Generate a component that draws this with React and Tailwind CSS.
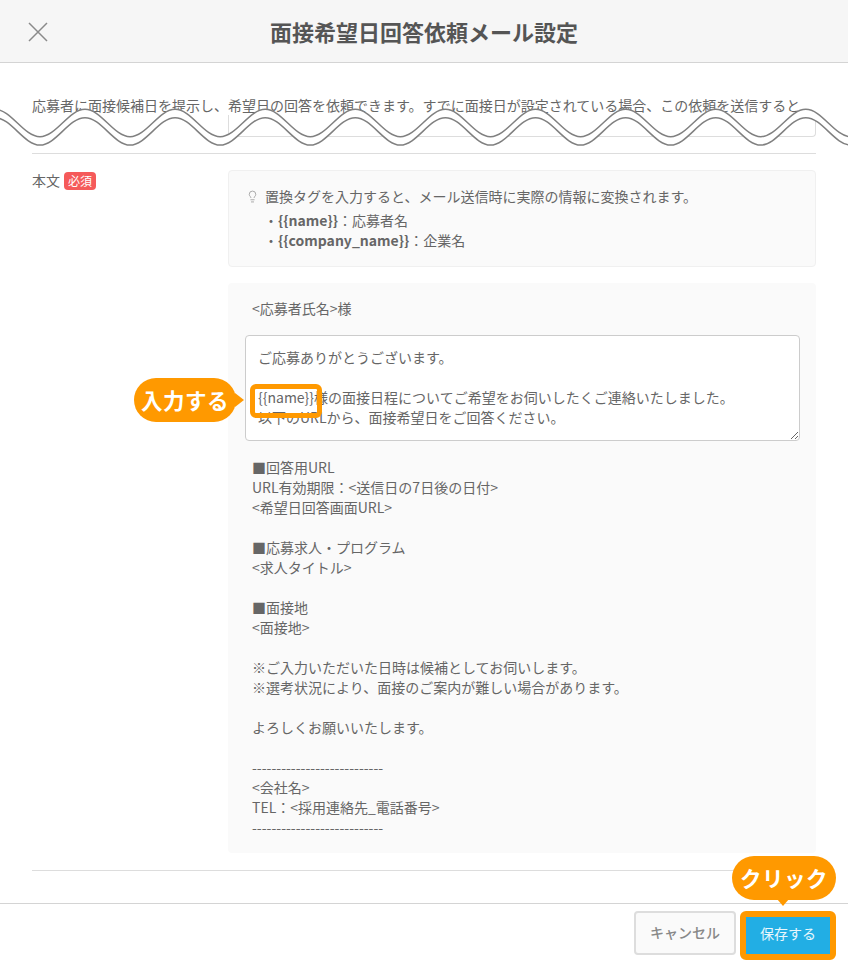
import React from 'react';
import { Lightbulb } from 'lucide-react';

const bodyText = `ご応募ありがとうございます。

{{name}}様の面接日程についてご希望をお伺いしたくご連絡いたしました。
以下のURLから、面接希望日をご回答ください。`;

const afterText = `■回答用URL
URL有効期限：<送信日の7日後の日付>
<希望日回答画面URL>

■応募求人・プログラム
<求人タイトル>

■面接地
<面接地>

※ご入力いただいた日時は候補としてお伺いします。
※選考状況により、面接のご案内が難しい場合があります。

よろしくお願いいたします。

---------------------------
<会社名>
TEL：<採用連絡先_電話番号>
---------------------------`;

// 省略を示す波線（2本の線を縦にずらして、間を白で塗る）
const period = 90.1;
const waveStart = -95.2;
const waveCount = 12;
const waveHeight = 27.4;
const waveGap = 8.4;

const waveForward = (top) => {
  let d = '';
  for (let i = 0; i < waveCount; i++) {
    const x = waveStart + i * period;
    const bottom = top + waveHeight;
    d += ` C${x + period * 0.18} ${top} ${x + period * 0.32} ${bottom} ${x + period * 0.5} ${bottom}`;
    d += ` C${x + period * 0.68} ${bottom} ${x + period * 0.82} ${top} ${x + period} ${top}`;
  }
  return d;
};

const waveBackward = (top) => {
  let d = '';
  for (let i = waveCount - 1; i >= 0; i--) {
    const x = waveStart + i * period;
    const bottom = top + waveHeight;
    d += ` C${x + period * 0.82} ${top} ${x + period * 0.68} ${bottom} ${x + period * 0.5} ${bottom}`;
    d += ` C${x + period * 0.32} ${bottom} ${x + period * 0.18} ${top} ${x} ${top}`;
  }
  return d;
};

const upperTop = 109.3;
const lowerTop = upperTop + waveGap;
const waveEnd = waveStart + waveCount * period;
const upperLine = `M${waveStart} ${upperTop}${waveForward(upperTop)}`;
const lowerLine = `M${waveStart} ${lowerTop}${waveForward(lowerTop)}`;
const waveBand = `${upperLine} L${waveEnd} ${lowerTop}${waveBackward(lowerTop)} Z`;

const App = () => {
  return (
    <div className="relative w-[848px] h-[964px] overflow-hidden bg-white flex flex-col text-[14px] leading-5 text-[#666] font-['Noto_Sans_CJK_JP',sans-serif]">
      <header className="h-[63px] shrink-0 relative flex items-center justify-center bg-[#f6f6f6] border-b border-[#d4d4d4]">
        <svg className="absolute left-[28px] top-[22px]" width="20" height="20" viewBox="0 0 20 20" fill="none" stroke="#8a8a8a" strokeWidth="1.5">
          <path d="M1 1l18 18M19 1L1 19" />
        </svg>
        <h1 className="text-[22px] font-bold text-[#555]">面接希望日回答依頼メール設定</h1>
      </header>

      <main className="flex-1 px-8">
        <p className="mt-[32px] whitespace-nowrap">
          応募者に面接候補日を提示し、希望日の回答を依頼できます。すでに面接日が設定されている場合、この依頼を送信すると
        </p>
        <div className="ml-[196px] h-[22px] border-b border-r border-l border-[#ddd] rounded-b" />
        <div className="mt-[16px] border-t border-[#ddd]" />

        <div className="flex pt-4 pb-[17px] border-b border-[#ddd]">
          <div className="w-[196px] shrink-0 flex items-start gap-1">
            <span>本文</span>
            <span className="mt-[2px] h-[18px] px-[4px] rounded bg-[#f55a5a] text-white text-[12px] leading-[18px]">必須</span>
          </div>

          <div className="flex-1 flex flex-col gap-4">
            <div className="h-[97px] rounded bg-[#fafafa] border border-[#f0f0f0] px-[17px] pt-[15px]">
              <div className="flex items-center gap-[6px] mb-1">
                <Lightbulb size={13} strokeWidth={1.5} className="text-[#999]" />
                <span>置換タグを入力すると、メール送信時に実際の情報に変換されます。</span>
              </div>
              <p className="pl-[18px]">・<b>{'{{name}}'}</b>：応募者名</p>
              <p className="pl-[18px]">・<b>{'{{company_name}}'}</b>：企業名</p>
            </div>

            <div className="h-[570px] rounded bg-[#fafafa] pl-[17px] pr-4 pt-[15px]">
              <p className="pl-[7px]">&lt;応募者氏名&gt;様</p>
              <div className="relative mt-[17px]">
                <textarea
                  readOnly
                  value={bodyText}
                  className="block w-full h-[106px] rounded border border-[#ccc] bg-white px-3 py-[11px] outline-none resize-y text-[#666]"
                />
                <div className="absolute left-[5px] top-[49px] w-[72px] h-[34px] rounded-md border-[5px] border-[#ff9900]" />
                <div className="absolute left-[-111px] top-[43px] w-[102px] h-[44px] rounded-[22px] bg-[#ff9900] flex items-center justify-center text-white text-[21.5px] font-bold tracking-[0.5px]">
                  入力する
                  <span className="absolute right-[-8px] top-[15px] border-y-[7px] border-y-transparent border-l-[9px] border-l-[#ff9900]" />
                </div>
              </div>
              <p className="mt-[16px] pl-[7px] whitespace-pre-line">{afterText}</p>
            </div>
          </div>
        </div>
      </main>

      <footer className="h-[61px] shrink-0 border-t border-[#d4d4d4] flex justify-end items-start gap-1 pt-[7px] pr-[12px]">
        <button className="w-[102px] h-[44px] rounded border-2 border-[#ddd] bg-[#fafafa] text-[#888] font-medium pb-[2px]">キャンセル</button>
        <div className="relative">
          <div className="w-[96px] h-[49px] rounded-md border-[6px] border-[#ff9900]">
            <button className="w-full h-full bg-[#22aee4] text-white/90 pb-[6px]">保存する</button>
          </div>
          <div className="absolute left-[-8px] top-[-55px] w-[104px] h-[44px] rounded-[22px] bg-[#ff9900] flex items-center justify-center text-white text-[21.5px] font-bold tracking-[0.5px]">
            クリック
            <span className="absolute left-[45px] bottom-[-6px] border-x-[6px] border-x-transparent border-t-[7px] border-t-[#ff9900]" />
          </div>
        </div>
      </footer>

      <svg className="absolute left-0 top-0 pointer-events-none" width="848" height="160" viewBox="0 0 848 160" fill="none">
        <path d={waveBand} fill="#ffffff" />
        <path d={upperLine} stroke="#808080" strokeWidth="1.5" />
        <path d={lowerLine} stroke="#808080" strokeWidth="1.5" />
      </svg>
    </div>
  );
};

export default App;
